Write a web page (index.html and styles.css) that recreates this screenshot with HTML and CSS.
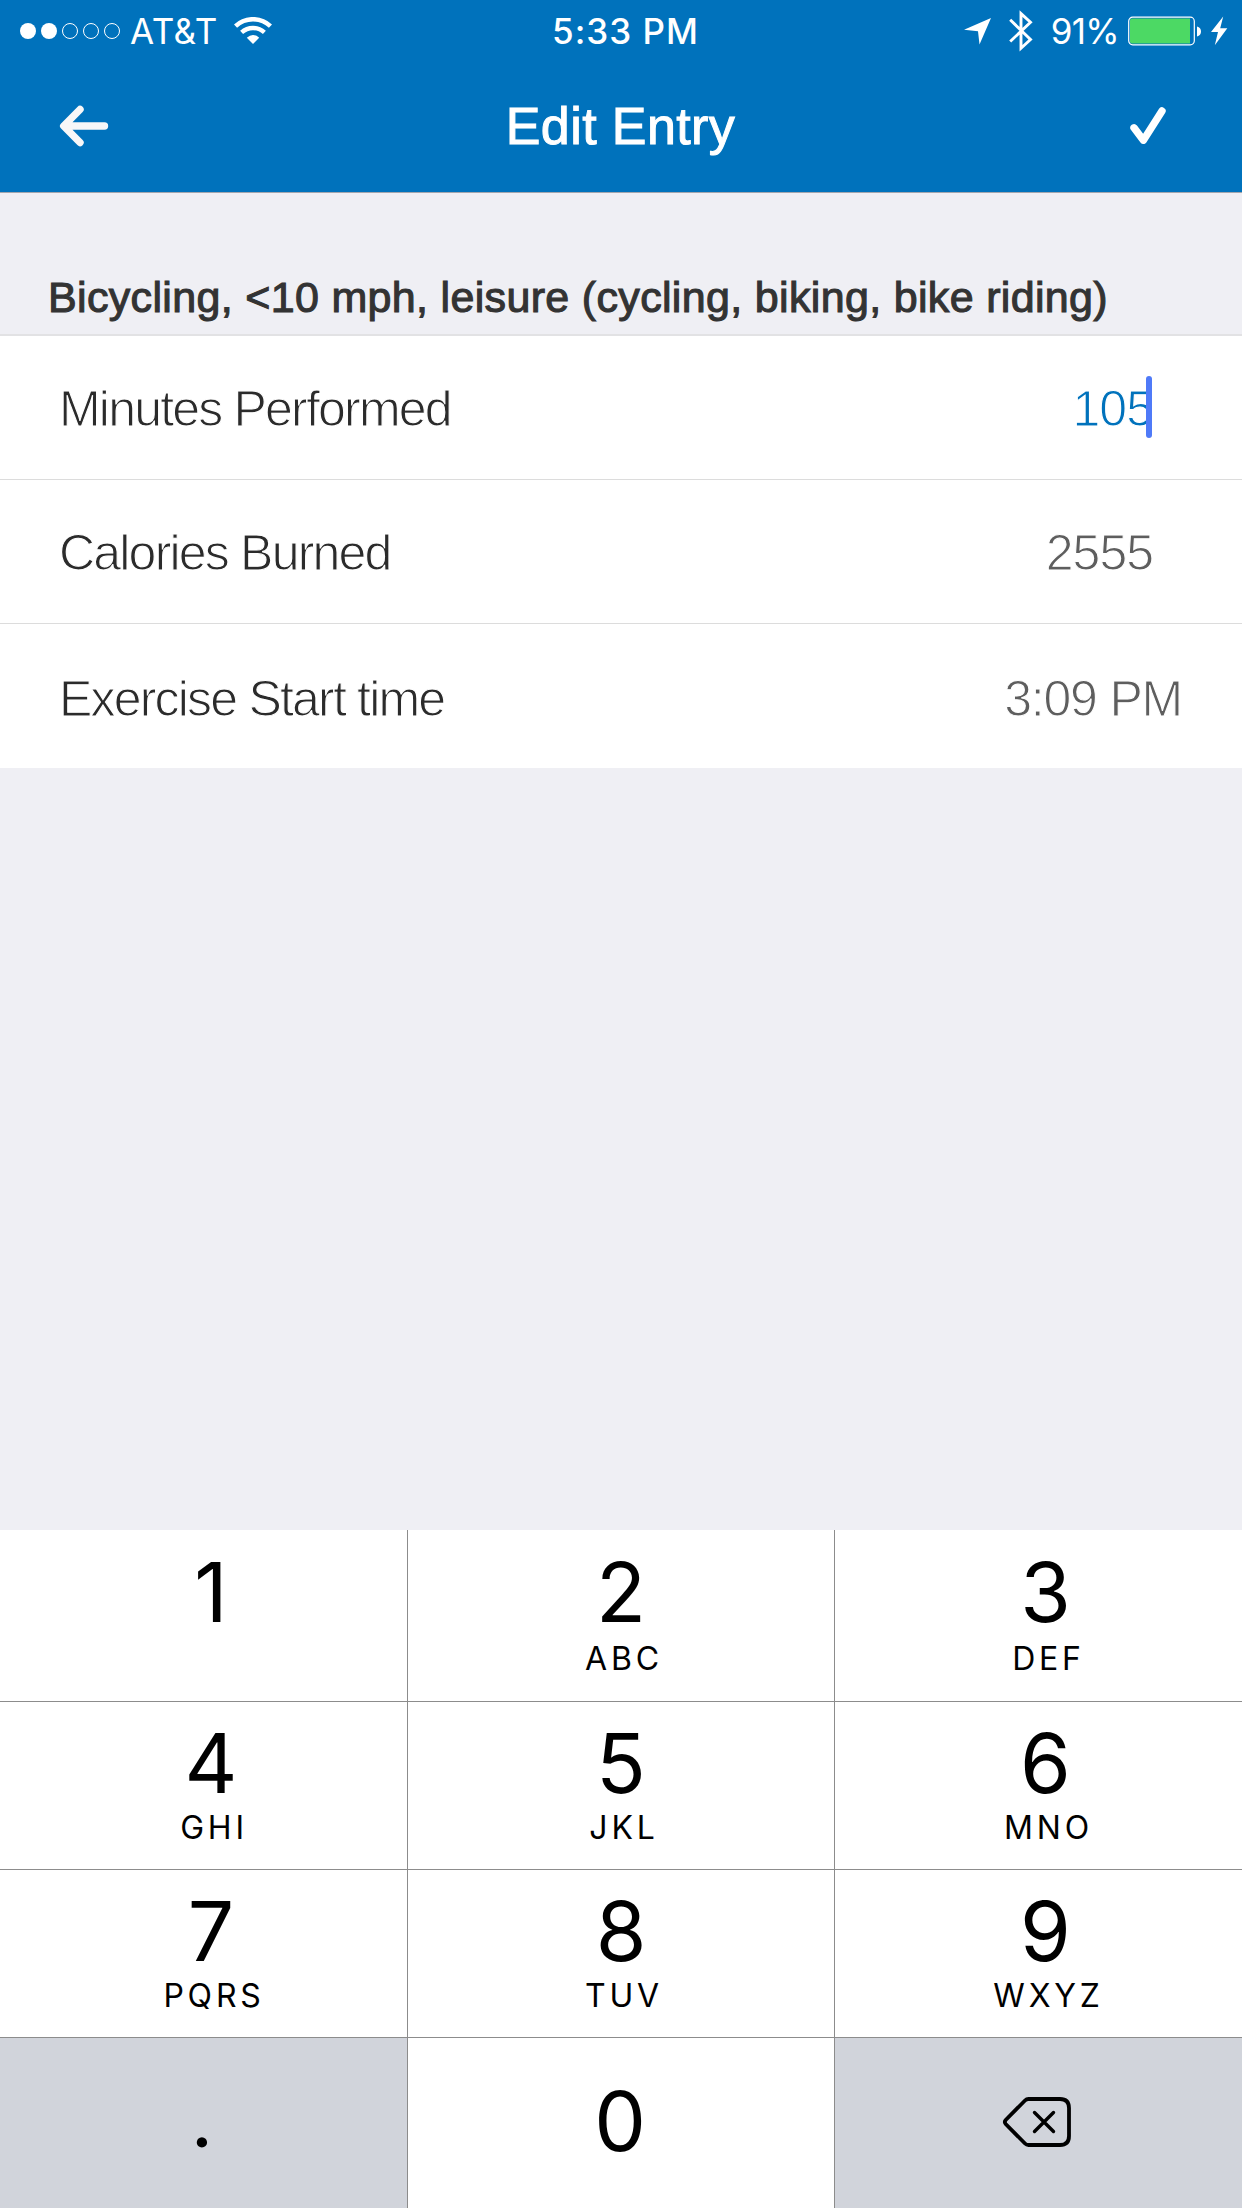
FILE: index.html
```html
<!DOCTYPE html>
<html lang="en">
<head>
  <meta charset="UTF-8">
  <meta name="viewport" content="width=device-width, initial-scale=1.0">
  <title>Edit Entry</title>
  <link rel="stylesheet" href="styles.css">
</head>
<body>
  <header class="header">
    <div class="status-bar">
      <div class="status-left">
        <svg class="signal" width="104" height="20" viewBox="0 0 104 20">
          <circle cx="10" cy="10" r="8" fill="#fff"/>
          <circle cx="31" cy="10" r="8" fill="#fff"/>
          <circle cx="52" cy="10" r="7.5" fill="none" stroke="#fff"/>
          <circle cx="73" cy="10" r="7.5" fill="none" stroke="#fff"/>
          <circle cx="94" cy="10" r="7.5" fill="none" stroke="#fff"/>
        </svg>
        <span class="carrier">AT&amp;T</span>
        <svg class="wifi" width="38" height="28" viewBox="0 0 38 28">
          <path d="M1.5 9.2A25.5 25.5 0 0 1 36.5 9.2" fill="none" stroke="#fff" stroke-width="4.6"/>
          <path d="M7.6 15.4A17 17 0 0 1 30.4 15.4" fill="none" stroke="#fff" stroke-width="4.4"/>
          <path d="M12.8 20.8Q19 15.2 25.2 20.8L19 27Z" fill="#fff"/>
        </svg>
      </div>
      <div class="clock">5:33 PM</div>
      <div class="status-right">
        <svg class="location" width="28" height="28" viewBox="0 0 28 28">
          <path d="M0 12.8L27 1L15.5 27.5L14 14.2Z" fill="#fff"/>
        </svg>
        <svg class="bluetooth" width="24" height="42" viewBox="0 0 24 42">
          <path d="M1.2 9.8L21.5 29.5L12 38.2V3.6L21.5 12.3L1.2 31.5" fill="none" stroke="#fff" stroke-width="2.9"/>
        </svg>
        <span class="percent">91%</span>
        <svg class="battery" width="74" height="30" viewBox="0 0 74 30">
          <rect x="0.7" y="1.2" width="65.6" height="27.6" rx="4" fill="none" stroke="#fff" stroke-width="1.2"/>
          <path d="M4 2.5H62V27.5H4Q2 27.5 2 25.5V4.5Q2 2.5 4 2.5Z" fill="#4cd964"/>
          <path d="M69 10.5Q73 11.5 73 15.5Q73 19.5 69 20.5Z" fill="#fff"/>
        </svg>
        <svg class="bolt" width="17" height="30" viewBox="0 0 17 30">
          <path d="M12.2 0.5L0 16H7L3.8 29.3L16.3 12.2H9.2Z" fill="#fff"/>
        </svg>
      </div>
    </div>
    <div class="nav-bar">
      <svg class="back" width="50" height="42" viewBox="0 0 50 42">
        <path d="M21 4.5L4.7 21L21 37.5M5 21H45.5" fill="none" stroke="#f7f7f8" stroke-width="7.4" stroke-linecap="round" stroke-linejoin="round"/>
      </svg>
      <h1 class="title">Edit Entry</h1>
      <svg class="done" width="38" height="40" viewBox="0 0 38 40">
        <path d="M5 21.8L14.4 34.2L33 5" fill="none" stroke="#fff" stroke-width="7.4" stroke-linecap="round" stroke-linejoin="round"/>
      </svg>
    </div>
  </header>

  <main class="content">
    <h2 class="section-title">Bicycling, &lt;10 mph, leisure (cycling, biking, bike riding)</h2>
    <div class="row">
      <span class="label">Minutes Performed</span>
      <span class="value number active">105<i class="caret"></i></span>
    </div>
    <div class="row">
      <span class="label">Calories Burned</span>
      <span class="value number">2555</span>
    </div>
    <div class="row last">
      <span class="label">Exercise Start time</span>
      <span class="value time">3:09 PM</span>
    </div>
  </main>

  <div class="keyboard">
    <div class="key left first"><b>1</b></div>
    <div class="key first"><b>2</b><span>ABC</span></div>
    <div class="key right first"><b>3</b><span>DEF</span></div>
    <div class="key left"><b>4</b><span>GHI</span></div>
    <div class="key"><b>5</b><span>JKL</span></div>
    <div class="key right"><b>6</b><span>MNO</span></div>
    <div class="key left"><b>7</b><span>PQRS</span></div>
    <div class="key"><b>8</b><span>TUV</span></div>
    <div class="key right"><b>9</b><span>WXYZ</span></div>
    <div class="key gray dot"><b>.</b></div>
    <div class="key zero"><b>0</b></div>
    <div class="key gray delete">
      <svg width="70" height="52" viewBox="0 0 70 52">
        <path d="M26.5 3H58Q67 3 67 12V40Q67 49 58 49H26.5Q24.5 49 23 47.5L3.7 28Q2 26 3.7 24L23 4.5Q24.5 3 26.5 3Z" fill="none" stroke="#000" stroke-width="3.8"/>
        <path d="M32.5 16.5L51.5 35.5M51.5 16.5L32.5 35.5" stroke="#000" stroke-width="3.4" stroke-linecap="round"/>
      </svg>
    </div>
  </div>
</body>
</html>
```

FILE: styles.css
```css
* {
  box-sizing: border-box;
}
body {
  margin: 0;
  width: 1242px;
  height: 2208px;
  display: flex;
  flex-direction: column;
  overflow: hidden;
  background-color: #efeff4;
  font-family: "Liberation Sans", Arial, sans-serif;
}
svg {
  display: block;
  flex: none;
}

/* header */
.header {
  height: 193px;
  background-color: #0072bc;
  border-bottom: 1px solid #a3a6ae;
  color: #fff;
}
.status-bar {
  height: 60px;
  padding: 0 14px 0 18px;
  display: grid;
  grid-template-columns: 1fr auto 1fr;
  align-items: center;
  font-family: Inter, sans-serif;
  font-size: 35px;
  line-height: 60px;
}
.status-left,
.status-right {
  display: flex;
  align-items: center;
}
.status-right {
  justify-content: flex-end;
}
.carrier,
.clock,
.percent {
  padding-top: 1px;
  white-space: nowrap;
}
.carrier {
  margin-left: 8px;
  letter-spacing: 0.5px;
}
.wifi {
  margin-left: 16px;
}
.clock {
  padding-left: 5px;
  font-weight: 500;
  letter-spacing: 1px;
}
.bluetooth {
  margin-left: 17px;
}
.percent {
  margin-left: 18px;
  letter-spacing: -0.7px;
}
.battery {
  margin-left: 9px;
}
.bolt {
  margin-left: 9px;
}
.nav-bar {
  height: 132px;
  padding: 0 75px 0 59px;
  display: flex;
  align-items: center;
  justify-content: space-between;
}
.title {
  margin: 0;
  padding-left: 3px;
  font-size: 52px;
  font-weight: normal;
  letter-spacing: 0.4px;
  -webkit-text-stroke: 1px #fff;
}

/* entry form */
.content {
  flex: 1;
}
.section-title {
  margin: 0;
  height: 143px;
  padding: 64px 0 0 48px;
  border-bottom: 2px solid #e2e2e4;
  color: #333;
  font-size: 43px;
  font-weight: normal;
  line-height: 80px;
  letter-spacing: 0.33px;
  white-space: nowrap;
  -webkit-text-stroke: 1.1px #333;
}
.row {
  height: 144px;
  padding: 2px 89px 0 59px;
  display: flex;
  align-items: center;
  justify-content: space-between;
  background-color: #fff;
  border-bottom: 1px solid #dcdcdc;
  font-size: 50px;
  /* thins the letters down to a light weight */
  -webkit-text-stroke: 1.1px #fff;
}
.row.last {
  padding-top: 5px;
  padding-right: 60px;
  border-bottom: none;
}
.label {
  color: #2b2b2b;
  letter-spacing: -1.8px;
}
.value {
  color: #5e5e5e;
}
.number {
  letter-spacing: -1px;
}
.time {
  letter-spacing: -1.2px;
}
.active {
  position: relative;
  color: #0072bc;
}
.caret {
  position: absolute;
  right: 1px;
  top: -4px;
  width: 6px;
  height: 62px;
  border-radius: 3px;
  background-color: #4f7af8;
}

/* number pad */
.keyboard {
  height: 678px;
  display: grid;
  grid-template-columns: 407px 426px 1fr;
  grid-template-rows: 171px 167px 167px 1fr;
  gap: 1px;
  background-color: #8c8c8c;
  color: #000;
  font-family: Inter, sans-serif;
}
.key {
  padding-top: 21px;
  display: flex;
  flex-direction: column;
  align-items: center;
  background-color: #fff;
}
.key b {
  font-size: 82px;
  font-weight: 400;
  line-height: 82px;
}
.key span {
  margin: 7px 0 0 6px;
  font-size: 32px;
  line-height: 32px;
  letter-spacing: 3.8px;
}
.key.first {
  padding-top: 22px;
}
.key.first span {
  margin-top: 9px;
}
.key.left {
  padding-left: 15px;
}
.key.right {
  padding-left: 14px;
}
.key.gray {
  background-color: #d1d4db;
}
.key.dot {
  padding: 36px 3px 0 0;
  font-family: Lato, sans-serif;
}
.key.zero {
  padding: 43px 2px 0 0;
}
.key.delete {
  padding: 58px 4px 0 0;
}
```
